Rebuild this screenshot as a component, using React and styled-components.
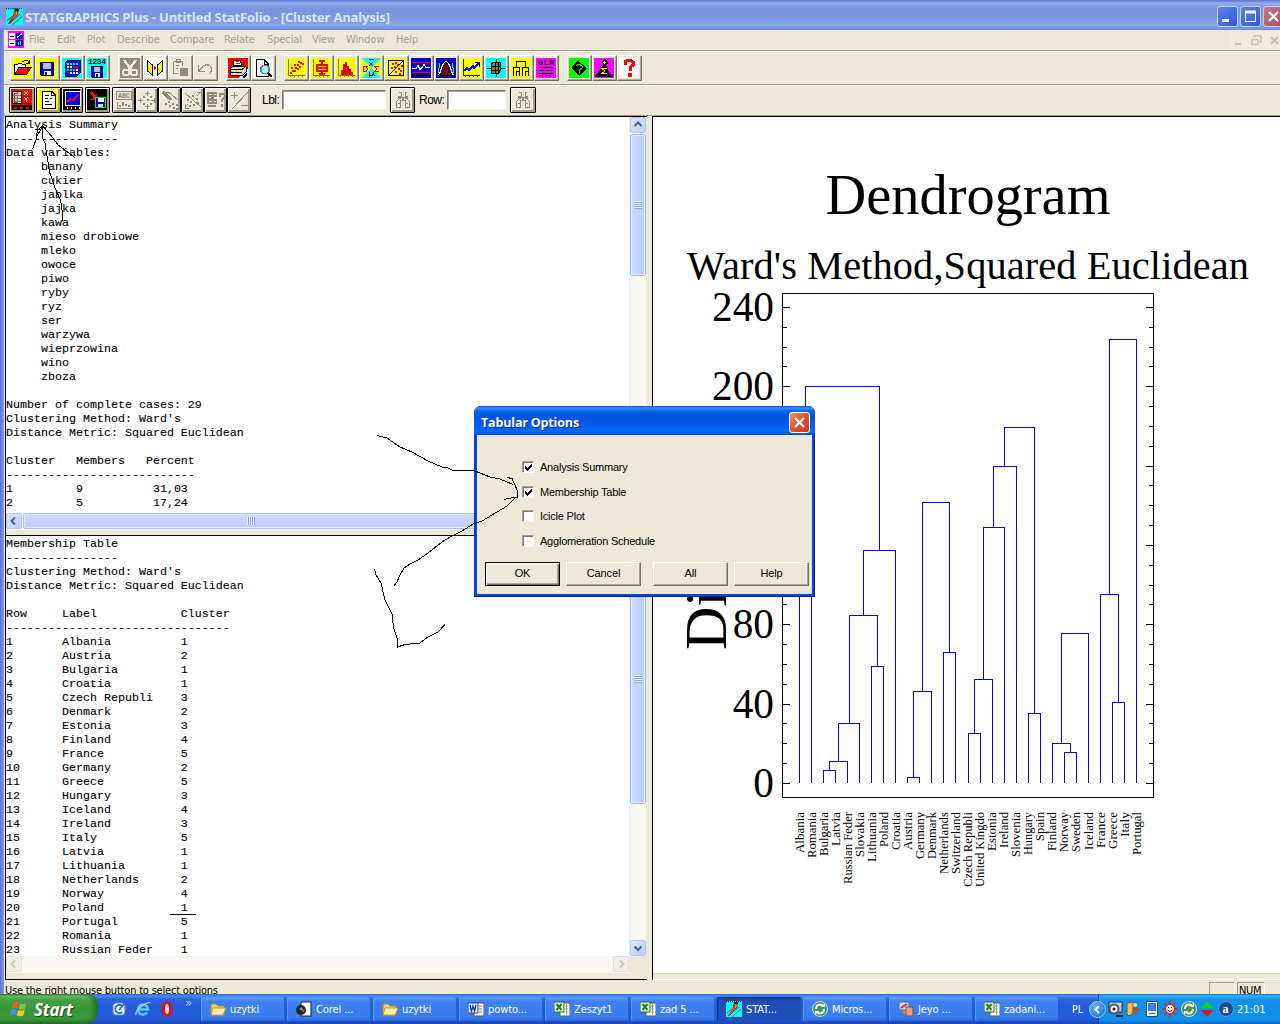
import React from "react";
import styled, { createGlobalStyle, css } from "styled-components";

const Global = createGlobalStyle`
  html, body { margin: 0; padding: 0; overflow: hidden; }
  * { box-sizing: border-box; }
`;

const face = "#ece9d8";
const tahoma = `"DejaVu Sans Condensed", "DejaVu Sans", sans-serif`;
const arial = `"Liberation Sans", Arial, sans-serif`;
const times = `"Liberation Serif", "Times New Roman", serif`;

/* ---------- frame ---------- */
const Screen = styled.div`
  position: relative;
  width: 1280px;
  height: 1024px;
  overflow: hidden;
  display: flex;
  flex-direction: column;
  background: ${face};
  font-family: ${tahoma};
  font-size: 11px;
  color: #000;
`;
const TitleBar = styled.div`
  height: 30px;
  flex: none;
  display: flex;
  align-items: center;
  padding: 3px 0 0 6px;
  background: linear-gradient(#6580d2 0, #6580d2 1px, #95aeee 3px, #7b95df 8px, #7a94de 15px, #84a6ea 25px, #7c9ce6 27px, #6c86d6 30px);
`;
const TitleText = styled.div`
  flex: 1;
  margin-left: 2px;
  font: bold 13px "Open Sans", "Noto Sans", sans-serif;
  letter-spacing: -0.17px;
  white-space: nowrap;
  color: #dbe5fa;
`;
const Caption = styled.div`
  width: 21px;
  height: 21px;
  margin: 0 ${(p) => (p.$close ? -4 : 2)}px 0 0;
  flex: none;
  border: 1px solid #c5d2f6;
  border-radius: 3px;
  background: ${(p) => (p.$close ? "linear-gradient(135deg,#bf7a8a,#a84f62)" : "linear-gradient(135deg,#5f83ea,#2f58dc)")};
  svg { display: block; }
`;
const Body = styled.div`
  flex: none;
  height: 964px;
  display: flex;
`;
const Edge = styled.div`
  width: 4px;
  flex: none;
  background: linear-gradient(90deg, #5a70cc, #7488e2 50%, #7f94e4);
`;
const Client = styled.div`
  flex: 1;
  min-width: 0;
  display: flex;
  flex-direction: column;
`;

/* ---------- menu and toolbars ---------- */
const MenuBar = styled.div`
  height: 20px;
  display: flex;
  align-items: center;
  padding: 0 0 1px 4px;
  color: #a19e90;
`;
const MenuItem = styled.div`
  width: ${(p) => p.$w}px;
  white-space: nowrap;
  letter-spacing: -0.1px;
`;
const ChildControls = styled.div`
  margin-left: auto;
  width: 50px;
  height: 18px;
  flex: none;
  background: #efecdf;
  svg { display: block; }
`;
const Etch = styled.div`
  height: 2px;
  flex: none;
  background: linear-gradient(#a09d8f 50%, #fff 50%);
`;
const Toolbar = styled.div`
  height: 32px;
  flex: none;
  display: flex;
  gap: 8px;
  padding: 3px 0 0 6px;
`;
const Group = styled.div`
  display: flex;
`;
const Tool = styled.div`
  width: 25px;
  height: 26px;
  padding: 2px 1px;
  border: 1px solid;
  border-color: #fff #716f64 #716f64 #fff;
  box-shadow: inset -1px -1px #aca899;
  background: ${face};
  svg { display: block; }
`;
const OptionBar = styled.div`
  height: 30px;
  flex: none;
  display: flex;
  align-items: flex-start;
  padding: 1px 0 0 5px;
  border-bottom: 1px solid #a09d8f;
  font-family: ${arial};
  font-size: 12px;
`;
const Option = styled.div`
  width: ${(p) => p.$w || 23}px;
  height: 26px;
  margin-right: ${(p) => p.$gap || 0}px;
  padding: 2px 0 0 1px;
  flex: none;
  overflow: hidden;
  border: 1px solid #000;
  border-radius: 1px;
  box-shadow: inset 1px 1px #fff, inset -2px -2px #a09d8f;
  background: ${(p) => p.$bg || face};
  svg { display: block; }
`;
const BarLabel = styled.div`
  width: ${(p) => p.$w}px;
  margin-top: 6px;
  letter-spacing: -0.5px;
  white-space: nowrap;
`;
const Field = styled.div`
  width: ${(p) => p.$w}px;
  height: 20px;
  margin: 3px 4px 0 0;
  background: #fff;
  border: 1px solid;
  border-color: #7b796d #f8f7f0 #f8f7f0 #7b796d;
  box-shadow: inset 1px 1px #a8a598;
`;

/* ---------- panes ---------- */
const Workspace = styled.div`
  height: 864px;
  flex: none;
  display: flex;
`;
const LeftColumn = styled.div`
  width: 643px;
  flex: none;
  padding-left: 1px;
  display: flex;
  flex-direction: column;
`;
const Pane = styled.div`
  height: ${(p) => p.$h}px;
  display: flex;
  flex-direction: column;
  border-top: 1px solid #000;
  border-left: 1px solid #000;
  ${(p) => p.$last && css`border-bottom: 1px solid #000;`}
`;
const PaneRow = styled.div`
  display: flex;
  height: ${(p) => p.$h}px;
  flex: none;
`;
const Report = styled.pre`
  width: 623px;
  margin: 0;
  padding-top: 1px;
  flex: none;
  overflow: hidden;
  background: #fff;
  font: 11.667px/14px "Liberation Mono", "Courier New", monospace;
  -webkit-text-stroke: 0.1px #000;
`;
const VBar = styled.div`
  width: 17px;
  display: flex;
  flex-direction: column;
  background: #f8f7f1;
  border-left: 1px solid #eeede5;
`;
const HBar = styled.div`
  width: 623px;
  height: 17px;
  flex: none;
  display: flex;
  background: #f8f7f1;
`;
const Arrow = styled.div`
  width: 16px;
  height: 16px;
  flex: none;
  display: flex;
  align-items: center;
  justify-content: center;
  border: 1px solid ${(p) => (p.$off ? "#e4e2d6" : "#b4c6f4")};
  border-radius: 2px;
  background: ${(p) => (p.$off ? "#f1efe5" : "linear-gradient(135deg,#dbe5ff,#bccefa)")};
`;
const Thumb = styled.div`
  flex: none;
  display: flex;
  align-items: center;
  justify-content: center;
  border: 1px solid #a6bbf0;
  border-radius: 2px;
  box-shadow: inset 0 0 0 1px #e3ebff;
  background: linear-gradient(${(p) => (p.$v ? "90deg" : "180deg")}, #cbdafe, #bccdf9);
  ${(p) => (p.$v ? css`width: 16px; height: ${p.$len}px; margin-top: 1px;` : css`height: 16px; width: ${p.$len}px; margin-left: 1px;`)}
`;
const Grip = styled.div`
  width: 8px;
  height: 8px;
  background: repeating-linear-gradient(${(p) => (p.$v ? "180deg" : "90deg")}, #eef3ff 0 1px, #8ba3e3 1px 2px);
`;
const Fill = styled.div`
  flex: 1;
`;
const GraphPane = styled.div`
  flex: 1;
  margin-left: 5px;
  border-top: 1px solid #000;
  border-left: 1px solid #000;
  display: flex;
  flex-direction: column;
`;
const Graph = styled.div`
  height: 856px;
  background: #fff;
  border-bottom: 1px solid #fbfaf5;
  svg { display: block; }
`;
const GraphEdge = styled.div`
  flex: 1;
  border-top: 1px solid #d9d6c6;
  border-bottom: 1px solid #fff;
`;

/* ---------- status ---------- */
const Status = styled.div`
  height: 14px;
  overflow: hidden;
  display: flex;
  padding: 4px 0 0 1px;
  white-space: nowrap;
`;
const StatusText = styled.div`
  flex: 1;
  letter-spacing: -0.2px;
`;
const Cell = styled.div`
  width: ${(p) => p.$w}px;
  height: 20px;
  margin: -2px ${(p) => p.$gap}px 0 0;
  padding: 1px 0 0 1px;
  letter-spacing: -0.3px;
  border: 1px solid;
  border-color: #a09d8f #fff #fff #a09d8f;
`;

/* ---------- dialog ---------- */
const Dialog = styled.div`
  position: absolute;
  left: 474px;
  top: 406px;
  width: 341px;
  height: 191px;
  display: flex;
  flex-direction: column;
  padding: 0 3px 3px;
  border-radius: 7px 7px 0 0;
  background: #0a45dc;
  box-shadow: inset -1px -1px #001ea0, inset 1px 0 #0831d9;
  font-family: ${arial};
  overflow: hidden;
`;
const DialogTitle = styled.div`
  height: 29px;
  margin: 0 -3px;
  padding: 3px 5px 0 7px;
  flex: none;
  display: flex;
  align-items: center;
  justify-content: space-between;
  color: #fff;
  font: bold 12.5px "Open Sans", "Noto Sans", sans-serif;
  letter-spacing: -0.17px;
  text-shadow: 1px 1px #0a2a8c;
  background: linear-gradient(#0a50d8 0, #3a92ff 2px, #0a62f2 5px, #0054e0 10px, #0458ea 18px, #026afe 25px, #0252d8 29px);
`;
const CloseBox = styled.div`
  width: 21px;
  height: 21px;
  border: 1px solid #fff;
  border-radius: 3px;
  background: linear-gradient(135deg, #f09378, #e0502c 50%, #c63a14);
  svg { display: block; }
`;
const DialogBody = styled.div`
  flex: 1;
  background: ${face};
  padding: 26px 0 0 8px;
  display: flex;
  flex-direction: column;
`;
const CheckRow = styled.label`
  height: 12px;
  margin: 0 0 ${(p) => p.$gap}px 37px;
  display: flex;
  align-items: center;
  gap: 6px;
  letter-spacing: -0.22px;
  white-space: nowrap;
`;
const Box = styled.span`
  width: 12px;
  height: 12px;
  background: #fff;
  border: 1px solid;
  border-color: #a5a294 #fbfaf5 #fbfaf5 #a5a294;
  box-shadow: inset 1px 1px #7b796d;
  svg { display: block; }
`;
const Buttons = styled.div`
  display: flex;
  margin-top: auto;
  padding-bottom: 8px;
`;
const Push = styled.div`
  width: 75px;
  height: 24px;
  padding-bottom: 2px;
  letter-spacing: -0.1px;
  margin-right: ${(p) => p.$gap || 0}px;
  display: flex;
  align-items: center;
  justify-content: center;
  background: ${face};
  border: 1px solid;
  ${(p) =>
    p.$default
      ? css`border-color: #000; box-shadow: inset 1px 1px #fff, inset -1px -1px #716f64, inset -2px -2px #aca899;`
      : css`border-color: #fff #716f64 #716f64 #fff; box-shadow: inset -1px -1px #aca899;`}
`;

/* ---------- taskbar ---------- */
const Taskbar = styled.div`
  height: 30px;
  flex: none;
  display: flex;
  color: #fff;
  background: linear-gradient(#2a63d8 0, #4a90f0 2px, #2a64e0 5px, #245bdb 12px, #245bdb 25px, #1b45b4 30px);
`;
const Start = styled.div`
  width: 98px;
  padding-left: 10px;
  display: flex;
  align-items: center;
  gap: 6px;
  border-radius: 0 10px 12px 0;
  font: italic bold 17px "Open Sans", "Noto Sans", sans-serif;
  letter-spacing: -0.3px;
  text-shadow: 1px 1px 1px #1d4a1d;
  background: linear-gradient(#3c863c 0, #74c374 2px, #43a043 6px, #379437 16px, #3c9a3c 25px, #256e25 30px);
  box-shadow: inset -4px 0 5px #23702a;
`;
const Quick = styled.div`
  width: 103px;
  padding-left: 13px;
  display: flex;
  align-items: center;
  gap: 8px;
`;
const More = styled.span`
  font-size: 13px;
  line-height: 10px;
  margin: -12px 0 0 2px;
  color: #b9d2ff;
`;
const Task = styled.div`
  width: 84px;
  height: 24px;
  margin: 3px 2px 0 0;
  padding-left: 9px;
  flex: none;
  display: flex;
  align-items: center;
  gap: 4px;
  border-radius: 2px;
  white-space: nowrap;
  letter-spacing: -0.1px;
  background: ${(p) => (p.$on ? "linear-gradient(#173f99,#1e4fb7 20%,#1e50b8)" : "linear-gradient(#5f9cfb,#3c81f3 20%,#3a7bee 85%,#2d68d8)")};
  box-shadow: ${(p) => (p.$on ? "inset 1px 1px 1px #0f2f80" : "inset 1px 0 #5c96f8, inset -1px 0 #2a5fd0")};
`;
const Lang = styled.div`
  width: 37px;
  padding: 9px 0 0 11px;
  font-size: 10.5px;
`;
const Tray = styled.div`
  flex: 1;
  display: flex;
  align-items: center;
  gap: 2.5px;
  background: linear-gradient(#0f78d8 0, #3ab4f8 2px, #1492ec 5px, #0f8fea 20px, #0f8eea 26px, #0b68c0 30px);
  border-left: 1px solid #0a3c9c;
`;
const Chevron = styled.div`
  width: 17px;
  height: 17px;
  margin: 0 -2px 0 -10px;
  flex: none;
  border-radius: 50%;
  border: 1px solid #a8d0fc;
  background: radial-gradient(circle at 35% 30%, #5fb4fb, #1769d6);
  svg { display: block; }
`;
const Clock = styled.div`
  margin-left: 1px;
`;
const Overlay = styled.svg`
  position: absolute;
  left: 0;
  top: 0;
  pointer-events: none;
`;

/* ---------- icons ---------- */
const Sq = ({ w = 20, h = 20, children }) => (
  <svg width={w} height={h} viewBox={`0 0 ${w} ${h}`} shapeRendering="crispEdges" fill="none">
    {children}
  </svg>
);
const Bg = ({ c }) => <rect width="20" height="20" fill={c} />;
const L = ({ d, c = "#000", w = 1, f = "none" }) => <path d={d} stroke={c} strokeWidth={w} fill={f} />;
const Dots = ({ at, c, s = 2 }) => at.map(([x, y], i) => <rect key={i} x={x} y={y} width={s} height={s} fill={c} />);
const GlyphText = ({ x, y, s, c = "#000", children, len }) => (
  <text x={x} y={y} fontSize={s} fill={c} fontWeight="bold" fontFamily="Liberation Mono, monospace" textLength={len}>
    {children}
  </text>
);
const Axes = ({ c = "#808000" }) => <L d="M2.5 1V17.5H19M4.5 17v2M8.5 17v2M12.5 17v2M16.5 17v2" c={c} />;
const Floppy = ({ x, y, s }) => (
  <g>
    <path d={`M${x + 0.5} ${y + 0.5}h${s - 1}v${s - 1}h${-(s - 2)}l-1 -1Z`} fill="#00f" stroke="#000" />
    <rect x={x + 3} y={y + 1} width={s - 6} height={Math.round(s * 0.45)} fill="#c0c0c0" />
    <rect x={x + 4} y={y + s - 5} width={s - 7} height="4" fill="#fff" />
    <rect x={x + 5} y={y + s - 4} width="2" height="3" fill="#00f" />
  </g>
);

const AppIcon = ({ size = 17 }) => (
  <svg width={size} height={size} viewBox="0 0 16 16">
    <rect width="16" height="16" fill="#0ff" />
    <path d="M0 .5H16" stroke="#000" strokeWidth="1.5" strokeDasharray="1 1" />
    <path d="M1 12L6 8M2 15L13 6M6 16L15 8" stroke="#087c80" />
    <path d="M3 14L7 8L8 3H11L11 6L8 9L4 14Z" fill="#ff0" stroke="#e00000" />
    <path d="M8 4L10 3L9 9L7 10Z" fill="#f04000" />
    <path d="M8 1H12V3H8Z" fill="#222" />
  </svg>
);
const ChildIcon = () => (
  <svg width="16" height="17" viewBox="0 0 16 17" shapeRendering="crispEdges">
    <rect width="16" height="17" fill="#f0f" />
    <rect x="1" y="2" width="6" height="6" fill="#fff" />
    <rect x="1" y="9" width="6" height="6" fill="#fff" />
    <rect x="8" y="2" width="7" height="6" fill="#00e" />
    <rect x="8" y="9" width="7" height="6" fill="#00a" />
    <path d="M2 5.5H6M2 12.500H6M8 7L14 2" stroke="#000" />
    <path d="M9 6.500L14 2.500" stroke="#fff" />
    <path d="M10.500 14V11M12.500 14V10" stroke="#0ff" />
  </svg>
);

const tools = {
  open: <Sq><Bg c="#ff0" /><L d="M2.5 16V6.5H5.5L6.5 5.5H9.5L10.5 6.5H13.5V9" f="#fff" /><path d="M3 16L7 9.5H19L15 16Z" fill="#f00" stroke="#000" /><L d="M10.5 4L12.5 2.5H15.5L17.5 5M17.5 1.5V5.5H14" /></Sq>,
  save: <Sq><Bg c="#ff0" /><Floppy x={3} y={4} s={14} /></Sq>,
  grid: <Sq><Bg c="#0ff" /><path d="M3 5L6 2H18V15L15 18H3Z" fill="#00f" stroke="#000" /><Dots s={2} c="#0ff" at={[[5, 5], [8, 5], [11, 5], [14, 5]]} /><Dots c="#ff0" at={[[5, 8], [8, 8]]} /><Dots c="#f00" at={[[11, 8], [14, 8], [5, 14]]} /><Dots c="#0f0" at={[[5, 11], [8, 11], [11, 11]]} /><Dots c="#fff" at={[[14, 11], [8, 14], [11, 14], [14, 14]]} /></Sq>,
  saveData: <Sq><Bg c="#0ff" /><GlyphText x={1} y={6} s={8} len={18}>1234</GlyphText><Floppy x={4} y={8} s={12} /></Sq>,
  cut: <Sq><Bg c="#8e8b7e" /><path d="M4 2L10 10L8 12M16 2L10 10L12 12" stroke="#ece9d8" strokeWidth="2.5" /><circle cx="6" cy="14.5" r="3" stroke="#ece9d8" strokeWidth="2" /><circle cx="14" cy="14.5" r="3" stroke="#ece9d8" strokeWidth="2" /></Sq>,
  link: <Sq><Bg c="#fff" /><path d="M2.5 3L7.5 7V17L2.5 13ZM17.5 3L12.5 7V17L17.5 13Z" fill="#ff0" stroke="#000" /><path d="M9 8L12 10L9 12Z" fill="#f00" /></Sq>,
  paste: <Sq><path d="M3.5 3.5H12.5V8M3.5 3.5V15.5H8M6 3V1.5H10V4.5H6ZM6 7H9M6 10H8" stroke="#8e8b7e" /><rect x="10" y="10" width="8" height="8" fill="#8e8b7e" /></Sq>,
  undo: <Sq><path d="M3.5 7V13.5H10M4 13L8 8Q13 5 16 9Q18 13 14 16" stroke="#8e8b7e" strokeWidth="1.3" /></Sq>,
  print: <Sq><Bg c="#f00" /><path d="M20 10V20H10Z" fill="#fff" /><path d="M6 8L5 2H12L14 7Z" fill="#fff" stroke="#000" /><L d="M8 3.5H11M8 5.5H12" c="#f00" /><path d="M2.500 10.500L5 8H16L18 9V14L15 17H3L2 15Z" fill="#d8d8d8" stroke="#000" /><L d="M3 11.5H14L17 9M3 14.5H14" /><path d="M14 19L19 14V17L16 20Z" fill="#008" /><rect x="9" y="12" width="4" height="2" fill="#ff0" /></Sq>,
  preview: <Sq><Bg c="#fff" /><path d="M3.5 1.5H11L15.5 6V18.5H3.5Z" fill="#fff" stroke="#000" /><L d="M11 1.5V6H15.5" /><circle cx="12" cy="11.5" r="4.2" fill="#9ff" stroke="#777" strokeWidth="1.5" /><L d="M15 15L19 19" w={2.5} /></Sq>,
  scatter: <Sq><Bg c="#ff0" /><Axes /><Dots c="#f00" at={[[4, 14], [6, 12], [5, 9], [8, 12], [9, 9], [8, 6], [11, 10], [11, 6], [13, 8], [14, 4], [16, 5], [12, 3]]} /></Sq>,
  box: <Sq><Bg c="#ff0" /><Axes /><path d="M6 7H16V13H6ZM11 3V7M11 13V16M8 3H14M8 16H14M7 10H15" stroke="#f00" strokeWidth="1.2" /></Sq>,
  hist: <Sq><Bg c="#ff0" /><Axes /><path d="M5 17V12H7V6H9V4H11V8H13V11H15V14H17V17Z" fill="#f00" /><L d="M7.5 17V12M9.5 17V5M13.5 17V11" c="#800000" /></Sq>,
  stats: <Sq><Bg c="#ff0" /><path d="M0 0H20L10 10ZM0 20H20L10 10Z" fill="#0ff" /><L d="M8 1.500H13M8 4L12 8M12 4L8 8" c="#a00000" /><L d="M7 8.500H3L2 10V12L3 13.500H5L6 12V10L5 9" c="#e00000" /><L d="M18 8.500H14L16 11L14 13.500H18" c="#e00000" /><L d="M8.500 19V14M8.500 17.500H11L12.500 16V14M12.500 17.500H14" c="#a00000" /></Sq>,
  regress: <Sq><Bg c="#ff0" /><L d="M2.5 2.5H17.5V17.5H2.5Z" c="#00f" /><L d="M3 17L17 3" c="#008" /><Dots c="#f00" at={[[6, 5], [9, 4], [5, 9], [8, 8], [11, 6], [12, 10], [9, 13], [14, 12], [13, 15], [15, 7]]} /></Sq>,
  control: <Sq><Bg c="#00c" /><L d="M1 4.5H19M1 14.5H19" c="#f00" /><L d="M1 10.5H5L7 7.5L9 11.5L11 9.5L13 6.5L15 9.5H19" c="#fff" /><L d="M1 17.5H19M3.5 16V19M7.5 16V19M11.5 16V19M15.5 16V19" /></Sq>,
  dist: <Sq><Bg c="#00c" /><path d="M5 17L8 8L10 5L12 8L15 17Z" fill="#800000" /><L d="M3 17L7 6L10 3L13 6L17 17" c="#ff0" w={1.4} /><L d="M2 15L4 5M18 15L16 5" c="#0ff" /><L d="M1 17.5H19M3.5 16V19M7.5 16V19M11.5 16V19M15.5 16V19" /></Sq>,
  series: <Sq><Bg c="#ff0" /><Axes c="#222" /><L d="M3 13L6 10L8 12L12 8L13 10L18 5M14 4.5H18.5V9" c="#00f" w={1.5} /></Sq>,
  cube: <Sq><Bg c="#0ff" /><path d="M5.5 5.5L7.500 4.500H14.500V12.500L12.500 15.500H5.500Z" fill="#808040" stroke="#000" /><L d="M10.500 1V4M10.500 16V19M1 10.500H5M15 10.500H19M9.500 5V15M12.500 5V15M6 8.500H14M6 12.500H14" /></Sq>,
  tree: <Sq><Bg c="#ff0" /><L d="M5.5 9V3.5H14.5V9M2.5 18V9.5H8.5V18M11.5 18V9.5H17.5V18M5.5 18V13.5H8.5M14.5 18V13.5H17.5" /></Sq>,
  glm: <Sq><Bg c="#f0f" /><GlyphText x={2} y={7} s={8} len={16}>GLM</GlyphText><L d="M3 9.5H17M3 12.5H8M10 12.5H17M3 15.5H17M3 17.5H7M9 17.5H14" /></Sq>,
  advisor: <Sq><Bg c="#0f0" /><path d="M3 8L9 3L17 9V12L10 18L3 11Z" fill="#000" /><path d="M7 8L10 6L13 8V10L10 12V15" stroke="#0f0" /></Sq>,
  wizard: <Sq><Bg c="#f0f" /><path d="M8 3L11 1L14 3V6L12 7L16 16H19V19H1V17L4 15L9 7Z" fill="#000" /><path d="M13 10.500H8L11 13L8 15.500H13M9 4.500H12M10.500 3V6" stroke="#ff0" /></Sq>,
  help: <Sq><Bg c="#fff" /><L d="M6 7V4L8 2.5H12L14 4V7L11 9.5V13" c="#f00" w={3} /><rect x="9" y="15" width="4" height="4" fill="#f00" /></Sq>,
};
const groups = [
  ["open", "save", "grid", "saveData"],
  ["cut", "link", "paste", "undo"],
  ["print", "preview"],
  ["scatter", "box", "hist", "stats", "regress", "control", "dist", "series", "cube", "tree", "glm"],
  ["advisor", "wizard", "help"],
];

const G = "#8e8b7e";
const optionIcons = {
  input: <Sq w={22}><path d="M1.500 1.500H10.500V13.500H1.500Z" fill="#d8d4c4" stroke="#000" /><path d="M3 3H6V12H3Z" stroke="#f00" /><L d="M6.500 2V13M2 5.500H10M2 8.500H10M2 11.500H10" c="#777" /><L d="M13 1L17 5M17 1L13 5M13 7L15 9.500L17 7M15 10V12" c="#ff0" /><L d="M12 6.500H20M12 13.500H20" c="#900" /><path d="M1 15H21V20H1Z" fill="#000" /><L d="M3 17.500H6M9 17.500H12M15 17.500H18" c="#f00" w={2} /></Sq>,
  text: <Sq w={22}><path d="M4.5 1.5H14L17.500 5V18.5H4.5Z" fill="#fff" stroke="#000" /><L d="M7 5.5H11M7 8.5H10M12 8.500H14M7 11.5H11M7 14.5H14M13.500 2V5.500H17" /></Sq>,
  graph: <Sq w={19}><path d="M2.500 1.500H17.500V15.500H2.500Z" fill="#00f" stroke="#fff" /><L d="M4 12L7 9L10 10L15 5" c="#f00" w={1.5} /><L d="M4.500 17V19M8.500 17V19M12.500 17V19M16.500 17V19" c="#fff" /></Sq>,
  saveRes: <Sq w={22}><path d="M2 3L4 1L8 5L10 3V10H4L6 7Z" fill="#f00" /><path d="M8.500 7.500H18.500V17.500H8.500Z" fill="#00c" stroke="#0f0" /><rect x="11" y="8" width="6" height="4" fill="#fff" /><rect x="11" y="14" width="5" height="3" fill="#ddd" /></Sq>,
  abc: <Sq><L d="M2.5 1.5H17.5V9.5H2.5Z" c={G} /><GlyphText x={4} y={8} s={7} c={G} len={12}>ABC</GlyphText><Dots c={G} at={[[5, 15], [8, 12], [8, 14], [11, 14], [14, 15]]} s={2} /><L d="M3.500 12V18.5H18" c={G} /></Sq>,
  jitter: <Sq><L d="M10.500 1V6M10.500 14V19M1 10.500H6M14 10.500H19M8 3.500H13M8 16.500H13M3.500 8V13M17.500 8V13" c={G} /><Dots c={G} at={[[6, 6], [13, 6], [6, 13], [13, 13], [10, 9]]} /></Sq>,
  brush: <Sq><path d="M1 3L4 1L13 9L11 10L7 9Z" fill={G} /><L d="M4 2.500H9L18 10" c={G} /><Dots c={G} at={[[5, 13], [8, 11], [9, 15], [12, 13], [13, 17], [16, 14], [16, 18]]} /></Sq>,
  rescale: <Sq><L d="M2 3L18 17M14 6L18 2M5 14L2 17M14 2.500H18.500V6M2.500 14V18.500H6" c={G} /><Dots c={G} s={2} at={[[4, 9], [7, 11], [9, 5], [13, 8], [10, 14], [14, 12], [6, 15]]} /></Sq>,
  find: <Sq><path d="M1 2H11V7H8V9H11V14H1ZM2 15H10V17H2Z" fill={G} /><L d="M3 4.500H6M8 4.500H10M3 7.500H5M3 11.500H6M8 11.500H10" c={face} /><L d="M13.500 7V4.500L15 3.500H17L18.500 5V7L16 10V12M16 14V17" c={G} w={2} /></Sq>,
  plusminus: <Sq><L d="M3 19L19 2" c={G} /><L d="M2 5.500H9M5.500 2V9M12 15.5H19" c={G} w={1.8} /></Sq>,
  binoc: <Sq w={22}><L d="M7 2.500H9V6H6.500V9L4.500 12V17.500H8.500V10.500H13.500V17.500H17.500V12L15.500 9V6H13V2.500H15M9 7.500H13M6 13.500H8M14 13.500H16" c={G} /><Dots c={G} at={[[7, 7], [13, 7], [10, 8]]} /></Sq>,
};

/* ---------- reports ---------- */
const dash = (n) => "-".repeat(n);
const variables = "banany cukier jablka jajka kawa mieso_drobiowe mleko owoce piwo ryby ryz ser warzywa wieprzowina wino zboza".split(" ");
const summary = [
  "Analysis Summary",
  dash(16),
  "Data variables:",
  ...variables.map((v) => "     " + v.replace("_", " ")),
  "",
  "Number of complete cases: 29",
  "Clustering Method: Ward's",
  "Distance Metric: Squared Euclidean",
  "",
  "Cluster   Members   Percent",
  dash(27),
  "1         9          31,03",
  "2         5          17,24",
].join("\n");
const members = [
  ["Albania", 1], ["Austria", 2], ["Bulgaria", 1], ["Croatia", 1], ["Czech Republi", 3], ["Denmark", 2],
  ["Estonia", 3], ["Finland", 4], ["France", 5], ["Germany", 2], ["Greece", 5], ["Hungary", 3], ["Iceland", 4],
  ["Ireland", 3], ["Italy", 5], ["Latvia", 1], ["Lithuania", 1], ["Netherlands", 2], ["Norway", 4], ["Poland", 1],
  ["Portugal", 5], ["Romania", 1], ["Russian Feder", 1],
];
const membership = [
  "Membership Table",
  dash(16),
  "Clustering Method: Ward's",
  "Distance Metric: Squared Euclidean",
  "",
  "Row     Label            Cluster",
  dash(32),
  ...members.map(([n, c], i) => String(i + 1).padEnd(8) + n.padEnd(17) + c),
].join("\n");

/* ---------- dendrogram ---------- */
const leaves = [
  ["Albania", 41], ["Romania", 46], ["Bulgaria", 44], ["Latvia", 34], ["Russian Feder", 72], ["Slovakia", 45],
  ["Lithuania", 50], ["Poland", 35], ["Croatia", 38], ["Austria", 38], ["Germany", 47], ["Denmark", 47],
  ["Netherlands", 62], ["Switzerland", 62], ["Czech Republi", 75], ["United Kingdo", 75], ["Estonia", 39],
  ["Ireland", 36], ["Slovenia", 45], ["Hungary", 43], ["Spain", 29], ["Finland", 39], ["Norway", 40],
  ["Sweden", 40], ["Iceland", 38], ["France", 36], ["Greece", 37], ["Italy", 25], ["Portugal", 43],
];
/* each link: left x, left foot, right x, right foot, height */
const links = [
  [799, 783, 811, 783, 590], [805, 590, 879, 550, 386], [863, 615, 895, 783, 550], [849, 723, 877, 666, 615],
  [838, 761, 859, 783, 723], [829, 770, 847, 783, 761], [823, 783, 835, 783, 770], [871, 783, 883, 783, 666],
  [907, 783, 919, 783, 777], [913, 777, 931, 783, 691], [922, 691, 949, 652, 502], [943, 783, 955, 783, 652],
  [968, 783, 980, 783, 733], [974, 733, 992, 783, 679], [983, 679, 1004, 783, 527], [993, 527, 1016, 783, 466],
  [1004, 466, 1034, 713, 427], [1028, 783, 1040, 783, 713], [1064, 783, 1076, 783, 752], [1052, 783, 1070, 752, 743],
  [1061, 743, 1088, 783, 633], [1112, 783, 1124, 783, 702], [1100, 783, 1118, 702, 594], [1109, 594, 1136, 783, 339],
];
const tickY = (v) => Math.floor(783.4 - v * 1.983) + 0.5;

const Dendrogram = () => (
  <svg width="627" height="855" viewBox="653 117 627 855" fontFamily={times} fill="#000">
    <text x="825.5" y="213.5" fontSize="56.4" textLength="285">Dendrogram</text>
    <text x="687" y="279" fontSize="40.4" textLength="562">Ward's Method,Squared Euclidean</text>
    {[240, 200, 160, 120, 80, 40, 0].map((v) => (
      <text key={v} x="774" y={tickY(v) + 13} fontSize="41.3" textAnchor="end">{v}</text>
    ))}
    <text transform="translate(726 650) rotate(-90)" fontSize="60">Distance</text>
    <g fill="none" shapeRendering="crispEdges">
      <rect x="782.5" y="293.5" width="371" height="504" stroke="#000" />
      {Array.from({ length: 25 }, (_, i) => {
        const y = tickY(i * 10);
        const n = i % 4 ? 5 : 8;
        return <path key={i} d={`M782 ${y}h${n}M1154 ${y}h${-n}`} stroke="#000" />;
      })}
      {links.map(([x1, y1, x2, y2, y], i) => (
        <path key={i} d={`M${x1 + 0.5} ${y1}V${y + 0.5}H${x2 + 0.5}V${y2}`} stroke="#0000ff" />
      ))}
    </g>
    {leaves.map(([n, len], i) => (
      <text key={n} transform={`translate(${Math.floor(804.3 + 12.03 * i)} ${812 + len}) rotate(-90)`} fontSize="12" textLength={len} lengthAdjust="spacingAndGlyphs">
        {n}
      </text>
    ))}
  </svg>
);

/* ---------- small parts ---------- */
const arrowPaths = { up: "M1.5 6L5 2.5L8.5 6", down: "M1.5 3.5L5 7L8.5 3.5", left: "M6 1.5L2.5 5L6 8.5", right: "M4 1.5L7.5 5L4 8.5" };
const ArrowBtn = ({ dir, off }) => (
  <Arrow $off={off}>
    <svg width="10" height="10" viewBox="0 0 10 10">
      <path d={arrowPaths[dir]} fill="none" stroke={off ? "#c9c7bc" : "#4d6185"} strokeWidth="2" />
    </svg>
  </Arrow>
);
const Check = () => (
  <svg width="10" height="10" viewBox="0 0 10 10" shapeRendering="crispEdges">
    <path d="M2 4V7L4 9L9 4V1L4 6Z" fill="#000" />
  </svg>
);
const CrossMark = ({ s = 19 }) => (
  <svg width={s} height={s} viewBox="0 0 19 19">
    <path d="M5 5L14 14M14 5L5 14" stroke="#fff" strokeWidth="2.2" />
  </svg>
);

const taskIcons = {
  folder: <g><path d="M1 3H6L8 5H14V14H1Z" fill="#f0d070" stroke="#b08a28" /><path d="M3 7H16L13 14H1Z" fill="#fff0a8" stroke="#c09a34" /></g>,
  corel: <g><rect x="5" y="1" width="10" height="14" fill="#fff" stroke="#223" /><circle cx="5" cy="9" r="5" fill="#222" /><path d="M3 8L6 6L7 10Z" fill="#4c8" /><path d="M6 9L9 8L7 12Z" fill="#c4a" /></g>,
  word: <g><rect x="6" y="2" width="10" height="13" fill="#fff" stroke="#456" /><path d="M11 5H14M11 8H14M11 11H14" stroke="#57a" /><rect x="0" y="2" width="10" height="10" fill="#dce8ff" stroke="#2a4a9a" /><path d="M2 4L3.5 10L5 5L6.5 10L8 4" stroke="#1a3a9a" strokeWidth="1.3" fill="none" /></g>,
  excel: <g><rect x="6" y="2" width="10" height="13" fill="#fff" stroke="#464" /><path d="M11 5H14M11 8H14M11 11H14M12.5 3V14" stroke="#7a9" /><rect x="0" y="1" width="10" height="10" fill="#e4f4dc" stroke="#2c6a20" /><path d="M2.5 3L7.5 9M7.5 3L2.5 9" stroke="#23801c" strokeWidth="2" /></g>,
  sync: <g><circle cx="8" cy="8" r="7.5" fill="#3f9a58" stroke="#cfe8d4" /><path d="M4 8A4 4 0 0 1 11 5M12 8A4 4 0 0 1 5 11" stroke="#fff" strokeWidth="2" fill="none" /><path d="M9 6H13V2ZM7 10H3V14Z" fill="#fff" /></g>,
  jeyo: <g><rect x="1" y="1" width="10" height="8" rx="2" fill="#c8d4e8" stroke="#678" /><path d="M3 7L9 3" stroke="#d33" strokeWidth="2" /><rect x="8" y="6" width="7" height="9" fill="#e0a080" stroke="#845" /><path d="M3 10L8 14L9 9Z" fill="#b8864a" /></g>,
};
const TaskIcon = ({ name }) =>
  name === "stat" ? <AppIcon size={16} /> : <svg width="16" height="16" viewBox="0 0 16 16">{taskIcons[name]}</svg>;
const tasks = [
  ["folder", "uzytki"], ["corel", "Corel ..."], ["folder", "uzytki"], ["word", "powto..."], ["excel", "Zeszyt1"],
  ["excel", "zad 5 ..."], ["stat", "STAT..."], ["sync", "Micros..."], ["jeyo", "Jeyo ..."], ["excel", "zadani..."],
];
const menus = [["File", 28], ["Edit", 30], ["Plot", 30], ["Describe", 53], ["Compare", 54], ["Relate", 43], ["Special", 45], ["View", 34], ["Window", 50], ["Help", 30]];
const Ico = ({ children }) => <svg width="16" height="16" viewBox="0 0 16 16" fill="none">{children}</svg>;
const MenuGap = styled.div`
  width: 5px;
`;

export default function App() {
  return (
    <Screen>
      <Global />
      <TitleBar>
        <AppIcon />
        <TitleText>STATGRAPHICS Plus - Untitled StatFolio - [Cluster Analysis]</TitleText>
        <Caption><svg width="19" height="19"><path d="M4 13.5H11" stroke="#fff" strokeWidth="3" /></svg></Caption>
        <Caption><svg width="19" height="19"><path d="M4.5 5H14.5V14.5H4.5Z" stroke="#fff" fill="none" /><path d="M4 5H15" stroke="#fff" strokeWidth="3" /></svg></Caption>
        <Caption $close><CrossMark /></Caption>
      </TitleBar>
      <Body>
        <Edge />
        <Client>
          <MenuBar>
            <ChildIcon />
            <MenuGap />
            {menus.map(([m, w]) => <MenuItem key={m} $w={w}>{m}</MenuItem>)}
            <ChildControls>
              <svg width="50" height="18" fill="none" stroke="#c4c1b4" strokeWidth="2">
                <path d="M5 13H11" /><path d="M22 8.5H28V13.5H22Z" strokeWidth="1.5" /><path d="M24 6V5H31V11H29" strokeWidth="1.5" /><path d="M41 6L48 13M48 6L41 13" />
              </svg>
            </ChildControls>
          </MenuBar>
          <Etch />
          <Toolbar>
            {groups.map((g, i) => (
              <Group key={i}>{g.map((n) => <Tool key={n}>{tools[n]}</Tool>)}</Group>
            ))}
          </Toolbar>
          <Etch />
          <OptionBar>
            <Option $w={26} $gap={1} $bg="#f00">{optionIcons.input}</Option>
            <Option $w={25} $bg="#ff0">{optionIcons.text}</Option>
            <Option $w={22} $gap={2} $bg="#000">{optionIcons.graph}</Option>
            <Option $w={25} $gap={2} $bg="#000">{optionIcons.saveRes}</Option>
            {["abc", "jitter", "brush", "rescale", "find"].map((n) => <Option key={n} $w={23}>{optionIcons[n]}</Option>)}
            <Option $w={24} $gap={11}>{optionIcons.plusminus}</Option>
            <BarLabel $w={20}>Lbl:</BarLabel>
            <Field $w={104} />
            <Option $w={25} $gap={4}>{optionIcons.binoc}</Option>
            <BarLabel $w={28}>Row:</BarLabel>
            <Field $w={59} />
            <Option $w={26}>{optionIcons.binoc}</Option>
          </OptionBar>
          <Workspace>
            <LeftColumn>
              <Pane $h={419}>
                <PaneRow $h={396}>
                  <Report>{summary}</Report>
                  <VBar>
                    <ArrowBtn dir="up" />
                    <Thumb $v $len={142}><Grip $v /></Thumb>
                    <Fill />
                    <ArrowBtn dir="down" />
                  </VBar>
                </PaneRow>
                <HBar>
                  <ArrowBtn dir="left" />
                  <Thumb $len={456}><Grip /></Thumb>
                  <Fill />
                  <ArrowBtn dir="right" />
                </HBar>
              </Pane>
              <Pane $h={445} $last>
                <PaneRow $h={420}>
                  <Report>{membership}</Report>
                  <VBar>
                    <ArrowBtn dir="up" />
                    <Thumb $v $len={251}><Grip $v /></Thumb>
                    <Fill />
                    <ArrowBtn dir="down" />
                  </VBar>
                </PaneRow>
                <HBar>
                  <ArrowBtn dir="left" off />
                  <Fill />
                  <ArrowBtn dir="right" off />
                </HBar>
              </Pane>
            </LeftColumn>
            <GraphPane>
              <Graph><Dendrogram /></Graph>
              <GraphEdge />
            </GraphPane>
          </Workspace>
          <Status>
            <StatusText>Use the right mouse button to select options</StatusText>
            <Cell $w={26} $gap={2} />
            <Cell $w={28} $gap={15}>NUM</Cell>
          </Status>
        </Client>
      </Body>
      <Taskbar>
        <Start>
          <svg width="18" height="18" viewBox="0 0 18 18">
            <path d="M3 3Q6 1 9 3L7.5 8.5Q5 7 1.5 8.5Z" fill="#f0592a" />
            <path d="M10 3.5Q13 5 16.5 3L15 9Q12 10.5 8.5 9Z" fill="#7cc83a" />
            <path d="M1.3 9.5Q4.5 8 7.3 9.5L6 15Q3 13.5 0 15Z" fill="#4a8cf0" />
            <path d="M8.3 10Q11 11.5 14.8 10L13.3 15.5Q10 17 6.8 15.5Z" fill="#fcc92e" />
          </svg>
          Start
        </Start>
        <Quick>
          <Ico><rect x="2" y="2" width="12" height="12" rx="3" fill="#e8f0fa" stroke="#6a88b8" /><path d="M11 5A4 4 0 1 0 11 11M8 9L14 2" stroke="#1f6fc4" strokeWidth="1.8" /><path d="M13 6L15 7" stroke="#e07820" strokeWidth="2" /></Ico>
          <Ico><path d="M3 8.5H13A5 5 0 1 0 12 11.5" stroke="#5cc4fb" strokeWidth="2.6" /><path d="M1 14Q0 10 7 5T15 2" stroke="#a8e0ff" strokeWidth="1.2" /></Ico>
          <Ico><ellipse cx="8" cy="8" rx="4" ry="6" stroke="#d01818" strokeWidth="3.5" /><ellipse cx="8" cy="8" rx="2" ry="5" fill="#e8d8e8" /></Ico>
          <More>»</More>
        </Quick>
        {tasks.map(([ic, t], i) => (
          <Task key={i} $on={ic === "stat"}><TaskIcon name={ic} />{t}</Task>
        ))}
        <Lang>PL</Lang>
        <Tray>
          <Chevron><svg width="15" height="15"><path d="M9 4L5.5 7.5L9 11" stroke="#fff" strokeWidth="2" fill="none" /></svg></Chevron>
          <Ico><rect x="2" y="1" width="13" height="10" fill="#bcd4e8" stroke="#234" /><circle cx="7" cy="8" r="4.5" fill="#eee" stroke="#555" strokeWidth="2" /><circle cx="7" cy="8" r="1.5" fill="#222" /><path d="M9 15H16" stroke="#111" strokeWidth="2" /></Ico>
          <Ico><path d="M2 2L8 1V12L4 15L2 13Z" fill="#f0c070" stroke="#84501c" /><path d="M9 4L11 8L8 11L12 13M11 8L15 9" stroke="#a8581c" strokeWidth="2" /><circle cx="10" cy="4" r="2" fill="#f8d890" /></Ico>
          <Ico><path d="M2.500 0.500H13.500V15.500H2.500Z" fill="#e8eef8" stroke="#234a8a" /><rect x="4" y="2" width="8" height="8" fill="#3f80e8" /><path d="M5 12.500H11" stroke="#666" /></Ico>
          <Ico><path d="M8 0V16M0 8H16M2.5 2.5L13.5 13.5M13.5 2.5L2.5 13.5" stroke="#e02828" strokeWidth="2" /><circle cx="8" cy="8" r="4.5" fill="#fce8e0" stroke="#c82020" /><path d="M6 6.5H7M9 6.5H10M5.5 9Q8 12 10.5 9" stroke="#222" /></Ico>
          <Ico>{taskIcons.sync}</Ico>
          <Ico><path d="M1.5 7L8 0.5L14.5 7Z" fill="#10d820" /><path d="M1.5 9L8 15.5L14.5 9Z" fill="#e81010" /></Ico>
          <Ico><circle cx="8" cy="8" r="7.5" fill="#1c4f98" stroke="#6a9ad0" /><text x="4.5" y="12" fontSize="12" fontWeight="bold" fontFamily={times} fill="#fff">a</text></Ico>
          <Clock>21:01</Clock>
        </Tray>
      </Taskbar>

      <Dialog>
        <DialogTitle>
          Tabular Options
          <CloseBox><CrossMark /></CloseBox>
        </DialogTitle>
        <DialogBody>
          <CheckRow $gap={13}><Box><Check /></Box>Analysis Summary</CheckRow>
          <CheckRow $gap={12}><Box><Check /></Box>Membership Table</CheckRow>
          <CheckRow $gap={13}><Box />Icicle Plot</CheckRow>
          <CheckRow $gap={0}><Box />Agglomeration Schedule</CheckRow>
          <Buttons>
            <Push $default $gap={6}>OK</Push>
            <Push $gap={12}>Cancel</Push>
            <Push $gap={6}>All</Push>
            <Push>Help</Push>
          </Buttons>
        </DialogBody>
      </Dialog>

      <Overlay width="1280" height="1024" fill="none" stroke="#000" shapeRendering="crispEdges">
        <path d="M377 435.5L387 438L400 447L412 452L428 461L442 467L448 468L453 470.5H474L480 473L490 477L500 479L513 484.5" />
        <path d="M507 477.5L512 478.5L515 485L517.5 491V497.5L511 498L504 499.5" />
        <path d="M515 498L507 506L492 515L482 521L473 524L462 531L452 536L442 542L428 553L418 560L410 564L404 568L399 577L397 582L394 586" />
        <path d="M374.5 569L376 575L381 583L385 600L392 614L393.5 627L397.5 640V647L405 644.5L420 643L428 637L438 632L445 624.5" />
        <path d="M62.5 221V213L60.5 200L55 188L49.5 172L45 143L42.5 138V126L37.5 130L36 140L32.5 149M35 129.5H41M42 125L53 138L58 145L65 150L75 157.5M37 136L43 126" />
        <path d="M170 914.5H196" />
      </Overlay>
    </Screen>
  );
}
